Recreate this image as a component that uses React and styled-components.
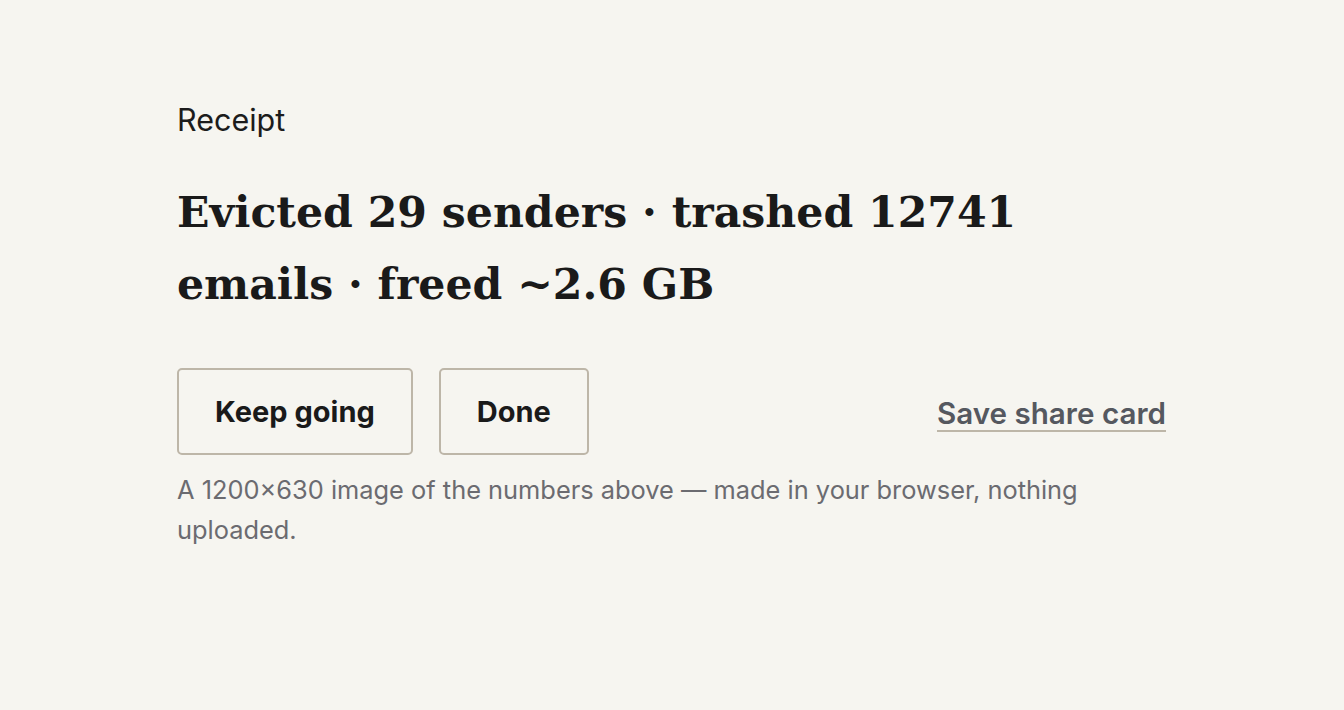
import styled, { createGlobalStyle } from 'styled-components';

const GlobalStyle = createGlobalStyle`
  html, body {
    margin: 0;
    background: #f6f5f0;
  }
  body {
    font-family: Inter, "Noto Sans", sans-serif;
    color: #1a1a1a;
  }
`;

export default function App() {
  return (
    <>
      <GlobalStyle />
      <Container>
        <Eyebrow>Receipt</Eyebrow>
        <Heading>Evicted 29 senders · trashed 12741 emails · freed ~2.6 GB</Heading>
        <Actions>
          <Button>Keep going</Button>
          <Button>Done</Button>
          <LinkButton>Save share card</LinkButton>
        </Actions>
        <Caption>
          A 1200×630 image of the numbers above — made in your browser, nothing uploaded.
        </Caption>
      </Container>
    </>
  );
}

const Container = styled.main`
  max-width: 990px;
  margin: 0 auto;
  padding-top: 100px;
  display: flex;
  flex-direction: column;
`;

const Eyebrow = styled.p`
  margin: 0;
  font-size: 30.5px;
  line-height: 40px;
  font-weight: 400;
  color: #1c1c1c;
`;

const Heading = styled.h1`
  margin: 36px 0 0;
  font-family: "DejaVu Serif", Georgia, serif;
  font-size: 42.6px;
  line-height: 72px;
  font-weight: 700;
  color: #1a1a1a;
`;

const Actions = styled.div`
  display: flex;
  align-items: center;
  gap: 26px;
  margin-top: 48px;
`;

const Button = styled.button`
  height: 87px;
  padding: 0 36px;
  border: 2px solid #bdb6a8;
  border-radius: 5px;
  background: transparent;
  font-family: Inter, "Noto Sans", sans-serif;
  font-size: 29px;
  font-weight: 700;
  color: #1a1a1a;
  cursor: pointer;
`;

const LinkButton = styled.button`
  margin: 5px 1px 0 auto;
  padding: 0;
  border: none;
  border-bottom: 2px solid #bdb6a8;
  background: transparent;
  font-family: Inter, "Noto Sans", sans-serif;
  font-size: 29.6px;
  font-weight: 600;
  line-height: 34px;
  color: #55585f;
  cursor: pointer;
`;

const Caption = styled.p`
  margin: 15px 0 0;
  font-size: 25.4px;
  line-height: 40px;
  color: #6b6b70;
`;
